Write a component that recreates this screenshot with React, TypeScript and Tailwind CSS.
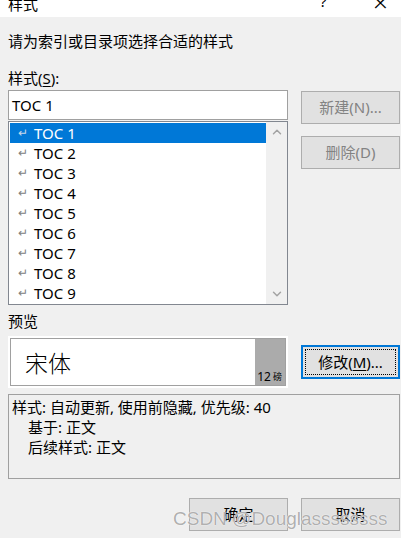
import { ChevronUp, ChevronDown } from "lucide-react";

const font = { fontFamily: '"Segoe UI", "Noto Sans", "Noto Sans CJK SC", sans-serif' };

function Btn({ label, disabled, focus }: { label: React.ReactNode; disabled?: boolean; focus?: boolean }) {
  if (focus) {
    return (
      <div className="h-[34px] w-[99px] shrink-0 border-2 border-[#0078d7] bg-[#e1e1e1] p-[2px]">
        <div className="flex h-full w-full items-center justify-center border border-dotted border-black text-[15px] text-black">
          {label}
        </div>
      </div>
    );
  }
  return (
    <div
      className={
        "flex h-[33px] w-[99px] shrink-0 items-center justify-center border border-[#adadad] bg-[#e1e1e1] text-[15px] " +
        (disabled ? "text-[#838383]" : "text-black")
      }
    >
      {label}
    </div>
  );
}

const items = ["TOC 1", "TOC 2", "TOC 3", "TOC 4", "TOC 5", "TOC 6", "TOC 7", "TOC 8", "TOC 9"];

export default function App() {
  return (
    <div className="relative h-[538px] w-[401px] overflow-hidden bg-[#f0f0f0] text-black" style={font}>
      {/* title bar */}
      <div className="relative h-[17px] overflow-hidden bg-white">
        <span className="absolute left-[8px] -top-[7px] text-[15px]">样式</span>
        <span className="absolute left-[320px] -top-[10px] text-[15px]">?</span>
        <span className="absolute left-[373px] -top-[17px] text-[26px] font-light">×</span>
      </div>

      <div className="w-[408px] px-[8px]">
        <div className="mt-[14px] h-[20px] text-[15px] leading-[20px]">请为索引或目录项选择合适的样式</div>
        <div className="mt-[17px] h-[20px] text-[15px] leading-[20px]">
          样式(<span className="underline underline-offset-2">S</span>):
        </div>

        <div className="mt-[2px] flex gap-[13px]">
          <div className="w-[280px] shrink-0">
            <div className="flex h-[30px] items-center border border-[#a0a0a0] bg-white pl-[3px] text-[15px]">TOC 1</div>
            <div className="mt-[1px] flex h-[184px] border border-[#828790] bg-white">
              <div className="flex-1 pl-[1px] pt-[1px]">
                {items.map((t, i) => (
                  <div
                    key={t}
                    className={
                      "flex h-[20px] items-center text-[15px] " +
                      (i === 0 ? "bg-[#0078d7] text-white" : "text-black")
                    }
                  >
                    <span className={"ml-[8px] w-[16px] text-[12px] " + (i === 0 ? "text-[#c8d8ea]" : "text-[#808080]")}>↵</span>
                    <span>{t}</span>
                  </div>
                ))}
              </div>
              <div className="flex w-[21px] flex-col items-center justify-between bg-[#f0f0f0] py-[3px]">
                <ChevronUp size={14} strokeWidth={2.5} className="text-[#a3a3a3]" />
                <ChevronDown size={14} strokeWidth={2.5} className="text-[#a3a3a3]" />
              </div>
            </div>
          </div>
          <div className="flex flex-col gap-[12px] pt-[1px]">
            <Btn label="新建(N)..." disabled />
            <Btn label="删除(D)" disabled />
          </div>
        </div>

        <div className="mt-[6px] h-[20px] text-[15px] leading-[20px]">预览</div>

        <div className="mt-[5px] flex items-center gap-[13px]">
          <div className="h-[52px] w-[280px] shrink-0 border-2 border-white">
            <div className="flex h-full border border-[#a0a0a0] bg-white">
              <div className="flex flex-1 items-center pl-[14px] text-[23px]" style={{ fontFamily: '"Noto Sans CJK SC", sans-serif', fontWeight: 300 }}>
                宋体
              </div>
              <div className="flex w-[30px] items-end justify-end bg-[#ababab] pb-[1px] pr-[3px] text-[12px] leading-[14px]">
                12<span className="ml-[2px] text-[9px]">磅</span>
              </div>
            </div>
          </div>
          <Btn
            focus
            label={
              <span>
                修改(<span className="underline underline-offset-2">M</span>)...
              </span>
            }
          />
        </div>

        <div className="mt-[6px] h-[85px] border border-[#a0a0a0] pl-[3px] pt-[2px] text-[15px] leading-[20px]">
          <div>样式: 自动更新, 使用前隐藏, 优先级: 40</div>
          <div className="pl-[16px]">基于: 正文</div>
          <div className="pl-[16px]">后续样式: 正文</div>
        </div>

        <div className="mt-[19px] flex justify-end gap-[13px]">
          <Btn label="确定" />
          <Btn label="取消" />
        </div>
      </div>

      <div
        className="absolute left-[173px] top-[505px] text-[19px] text-[#9a9a9a]/80"
        style={{ fontFamily: '"Liberation Sans", sans-serif', textShadow: "0 0 1px #fff, 0 0 1px #fff" }}
      >
        CSDN @Douglassssssss
      </div>
    </div>
  );
}
